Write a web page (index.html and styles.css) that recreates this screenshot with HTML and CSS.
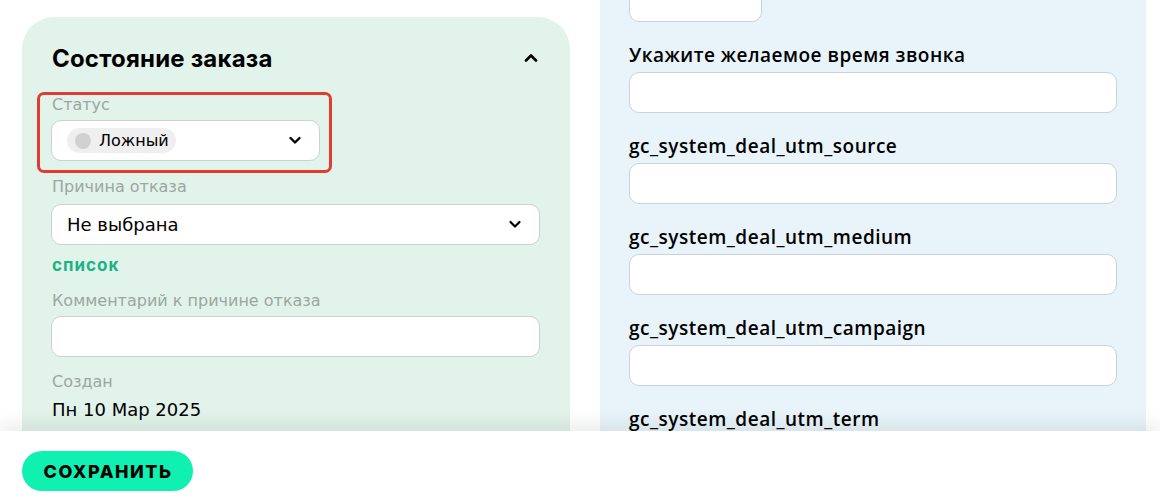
FILE: index.html
```html
<!DOCTYPE html>
<html lang="ru">
<head>
    <meta charset="UTF-8">
    <title>Заказ</title>
    <link rel="stylesheet" href="styles.css">
</head>
<body>
<div class="page">
    <div class="columns">
        <div class="order-card">
            <div class="card-head">
                <h2 class="card-title">Состояние заказа</h2>
                <svg class="chev-up" width="14" height="9" viewBox="0 0 14 9"><path d="M2 7.5L7 2.5L12 7.5" fill="none" stroke="#000" stroke-width="2.6" stroke-linecap="round" stroke-linejoin="round"/></svg>
            </div>
            <div class="status-box">
                <div class="field-label">Статус</div>
                <div class="select select-status">
                    <span class="chip"><span class="chip-dot"></span>Ложный</span>
                    <svg class="chev" width="14" height="9" viewBox="0 0 14 9"><path d="M2.5 2L7 6.5L11.5 2" fill="none" stroke="#000" stroke-width="2.4" stroke-linecap="round" stroke-linejoin="round"/></svg>
                </div>
            </div>
            <div class="field-label label-reason">Причина отказа</div>
            <div class="select select-wide">
                <span class="select-text">Не выбрана</span>
                <svg class="chev" width="14" height="9" viewBox="0 0 14 9"><path d="M2.5 2L7 6.5L11.5 2" fill="none" stroke="#000" stroke-width="2.2" stroke-linecap="round" stroke-linejoin="round"/></svg>
            </div>
            <a href="#" class="list-link">список</a>
            <div class="field-label label-comment">Комментарий к причине отказа</div>
            <div class="input input-wide"></div>
            <div class="field-label label-created">Создан</div>
            <div class="created-date">Пн 10 Мар 2025</div>
        </div>
        <div class="extra-panel">
            <div class="input input-small"></div>
            <div class="extra-label">Укажите желаемое время звонка</div>
            <div class="input"></div>
            <div class="extra-label">gc_system_deal_utm_source</div>
            <div class="input"></div>
            <div class="extra-label">gc_system_deal_utm_medium</div>
            <div class="input"></div>
            <div class="extra-label">gc_system_deal_utm_campaign</div>
            <div class="input"></div>
            <div class="extra-label">gc_system_deal_utm_term</div>
            <div class="input"></div>
        </div>
    </div>
</div>
<div class="footer">
    <button class="save-btn">СОХРАНИТЬ</button>
</div>
</body>
</html>
```

FILE: styles.css
```css
html, body{
    margin: 0;
    padding: 0;
    background: #fff;
    overflow: hidden;
}
body{
    font-family: "DejaVu Sans", "Noto Sans", sans-serif;
    color: #000;
}
.page{
    height: 431px;
    overflow: hidden;
}
.columns{
    display: flex;
    gap: 30px;
    padding-left: 22px;
    align-items: flex-start;
}
.order-card{
    width: 548px;
    box-sizing: border-box;
    margin-top: 17px;
    padding: 27px 30px 40px 29px;
    background: #e2f3ec;
    border-radius: 32px;
    display: flex;
    flex-direction: column;
    align-items: flex-start;
}
.card-head{
    width: 100%;
    display: flex;
    justify-content: space-between;
    align-items: center;
}
.card-title{
    margin: 0 0 0 1px;
    font-family: Inter, "Noto Sans", sans-serif;
    font-size: 24px;
    line-height: 30px;
    font-weight: 700;
    letter-spacing: 0.2px;
}
.chev-up{
    margin-right: 2px;
    margin-top: -4px;
}
.status-box{
    margin-top: 18px;
    margin-left: -14px;
    padding: 0 9px 9px 11px;
    border: 3px solid #e23b30;
    border-radius: 7px;
}
.field-label{
    font-size: 16px;
    line-height: 20px;
    color: #9ba7a1;
    margin-left: 1px;
}
.select{
    box-sizing: border-box;
    height: 41px;
    margin-top: 5px;
    background: #fff;
    border: 1px solid #c9d3cf;
    border-radius: 10px;
    display: flex;
    align-items: center;
    justify-content: space-between;
    padding: 0 17px 0 15px;
}
.select-status{
    width: 269px;
}
.select-wide{
    width: 489px;
    margin-top: 7px;
}
.chip{
    display: flex;
    align-items: center;
    height: 25px;
    padding: 0 7px 0 8px;
    background: #efefef;
    border-radius: 13px;
    font-size: 16px;
}
.chip-dot{
    width: 16px;
    height: 16px;
    border-radius: 50%;
    background: #d1d1d1;
    margin-right: 8px;
}
.select-text{
    font-size: 18px;
}
.label-reason{
    margin-top: 4px;
}
.list-link{
    margin-top: 10px;
    margin-left: 1px;
    font-family: Inter, "Noto Sans", sans-serif;
    font-size: 17px;
    line-height: 20px;
    font-weight: 700;
    letter-spacing: 1px;
    color: #1cb385;
    text-decoration: none;
}
.label-comment{
    margin-top: 16px;
}
.input{
    box-sizing: border-box;
    height: 41px;
    width: 488px;
    background: #fff;
    border: 1px solid #c9d3dc;
    border-radius: 10px;
}
.input-wide{
    width: 489px;
    margin-top: 5px;
    border-color: #c9d3cf;
}
.label-created{
    margin-top: 15px;
}
.created-date{
    margin-top: 7px;
    margin-left: 1px;
    font-size: 18px;
    line-height: 22px;
}
.extra-panel{
    width: 546px;
    box-sizing: border-box;
    padding: 0 29px 40px 29px;
    background: #e8f4fa;
}
.input-small{
    width: 133px;
    margin-top: -19px;
}
.extra-label{
    margin-top: 22px;
    margin-bottom: 6px;
    font-family: "Open Sans", "Noto Sans", sans-serif;
    font-size: 19px;
    line-height: 22px;
    font-weight: 600;
    letter-spacing: 0.5px;
}
.footer{
    position: relative;
    height: 72px;
    background: #fff;
    box-shadow: 0 -6px 18px rgba(0, 30, 20, 0.09);
    padding: 20px 0 0 22px;
    box-sizing: border-box;
}
.save-btn{
    height: 40px;
    width: 171px;
    border: none;
    border-radius: 20px;
    background: #10f0b1;
    font-family: Inter, "Noto Sans", sans-serif;
    font-size: 18px;
    font-weight: 800;
    letter-spacing: 1.5px;
    color: #000;
    padding: 0 0 0 1px;
}
```
